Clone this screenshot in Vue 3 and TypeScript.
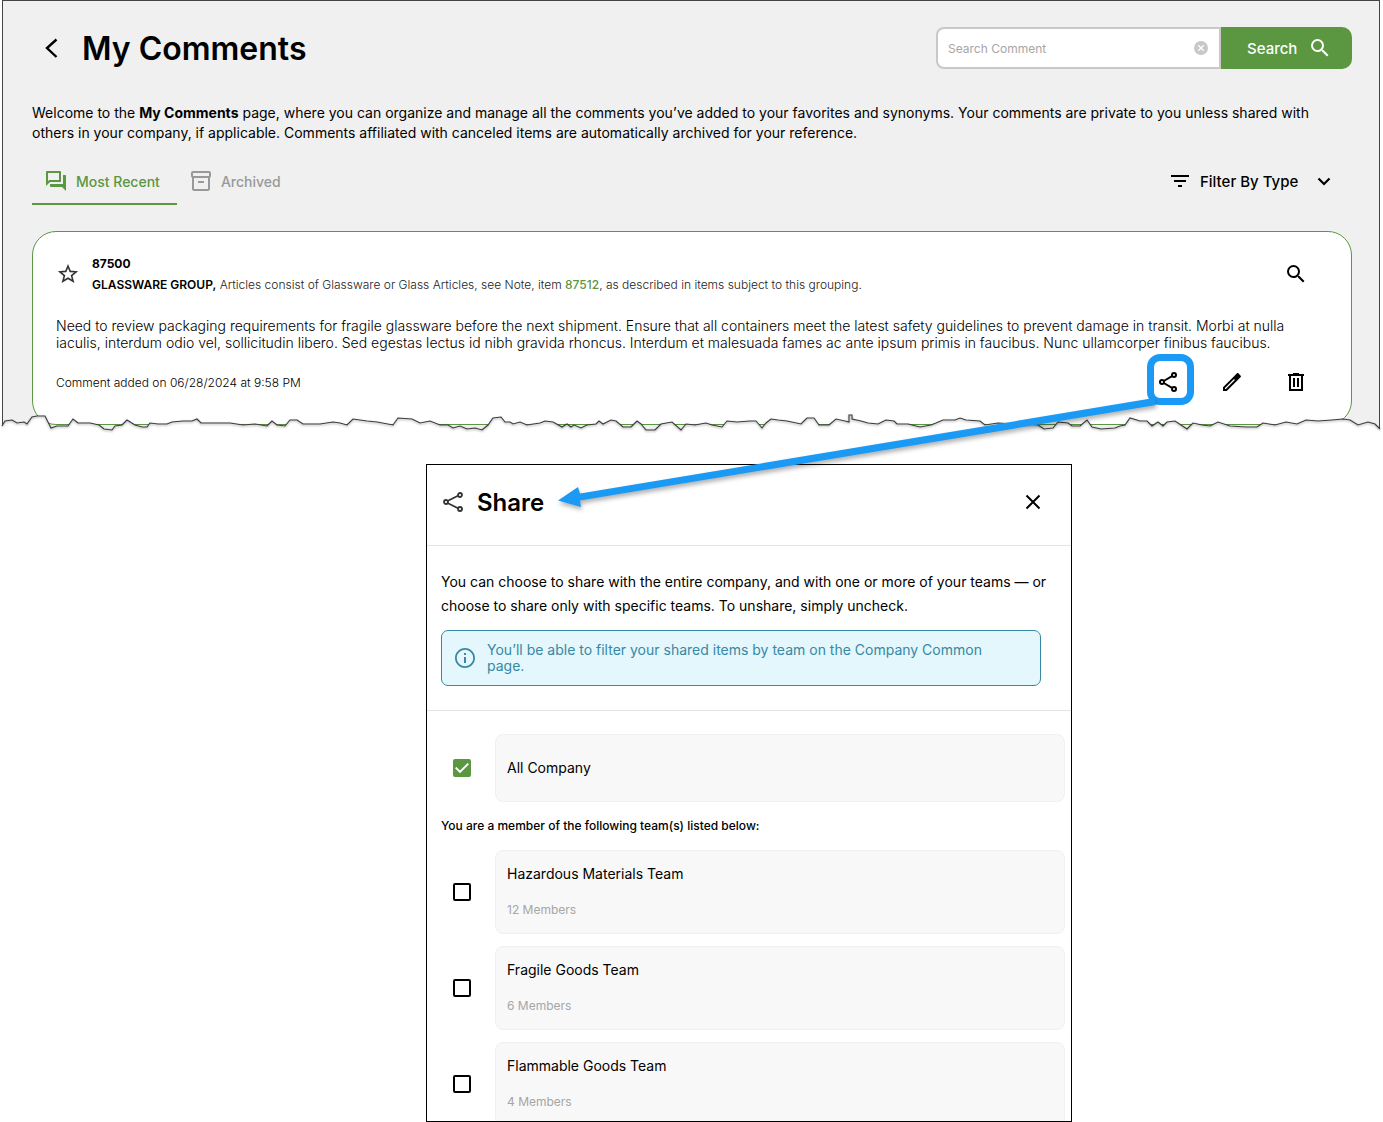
<script setup lang="ts">
import { ref } from 'vue'

interface Team {
  id: string
  name: string
  members: number
  shared: boolean
}

const query = ref('')
const allCompany = ref(true)
const filterType = ref('')
const activeTab = ref<'recent' | 'archived'>('recent')
const teams = ref<Team[]>([
  { id: 'hazmat', name: 'Hazardous Materials Team', members: 12, shared: false },
  { id: 'fragile', name: 'Fragile Goods Team', members: 6, shared: false },
  { id: 'flammable', name: 'Flammable Goods Team', members: 4, shared: false },
])

// Torn lower edge of the page panel, left to right.
const tear =
  '2,426 5,421 12,420 17,423 24,422 27,424 32,417 37,416 45,416 51,428 57,426 68,426 73,419 78,423 90,423 99,425 104,429 112,430 115,426 122,425 127,420 135,425 142,427 147,427 150,423 158,424 167,424 172,422 183,421 192,421 197,419 201,423 213,423 230,423 243,425 255,424 267,426 272,421 277,425 285,426 290,420 297,420 303,424 320,424 333,422 340,423 347,425 353,419 367,421 377,422 393,425 398,418 412,419 420,423 430,421 440,425 448,425 453,428 460,426 ' +
  '467,429 475,428 482,430 488,425 493,418 501,417 505,422 510,422 513,424 520,422 527,425 540,423 545,421 553,422 562,427 567,424 571,427 574,425 581,428 587,425 596,424 599,421 603,424 611,420 616,421 623,427 631,427 637,421 641,424 646,430 655,430 661,424 672,422 681,430 686,424 695,425 706,423 712,425 722,427 727,421 737,422 750,421 756,421 762,428 766,423 771,419 778,420 787,421 801,424 807,418 814,418 819,425 829,425 836,419 845,421 849,422 849,415 852,415 852,419 861,421 868,423 878,424 886,420 894,421 897,424 908,424 920,427 ' +
  '931,425 936,423 943,420 955,420 960,418 966,420 980,421 985,425 998,423 1013,424 1026,424 1038,425 1044,429 1053,428 1058,422 1068,423 1072,426 1080,426 1087,420 1092,427 1101,429 1115,428 1120,426 1125,425 1130,418 1140,421 1147,421 1152,426 1158,422 1163,426 1167,422 1175,421 1181,425 1187,429 1193,423 1202,425 1210,426 1218,422 1230,426 1246,427 1257,427 1263,423 1275,425 1286,422 1297,424 1306,420 1318,421 1332,420 1343,419 1350,420 1358,425 1368,422 1375,424 1380,429'
</script>

<template>
  <main class="page">
    <section class="panel">
      <header class="panel-head">
        <button class="icon-btn" type="button" aria-label="Back">
          <svg width="40" height="24" viewBox="0 0 40 24"><path d="M24.500 3.500 15 12l9.500 9" fill="none" stroke="#000" stroke-width="2.400" /></svg>
        </button>
        <h1>My Comments</h1>
        <form class="search" role="search" @submit.prevent>
          <div class="search-box">
            <input v-model="query" type="text" aria-label="Search Comment" placeholder="Search Comment" />
            <button class="icon-btn" type="button" aria-label="Clear" @click="query = ''">
              <svg width="14" height="14" viewBox="0 0 14 14"><circle cx="7" cy="7" r="7" fill="#c8c8c8" /><path d="m4.300 4.300 5.400 5.400m0-5.400L4.300 9.700" stroke="#fff" stroke-width="1.300" /></svg>
            </button>
          </div>
          <button class="search-btn" type="submit">
            Search
            <svg width="24" height="24" viewBox="0 0 24 24" fill="#fff"><path d="M15.500 14h-.79l-.28-.27A6.471 6.471 0 0 0 16 9.500 6.500 6.500 0 1 0 9.500 16c1.610 0 3.090-.59 4.230-1.570l.27.28v.79l5 4.990L20.490 19l-4.990-5zm-6 0C7.010 14 5 11.990 5 9.500S7.010 5 9.500 5 14 7.010 14 9.500 11.990 14 9.500 14z" /></svg>
          </button>
        </form>
      </header>

      <p class="intro">
        Welcome to the <strong>My Comments</strong> page, where you can organize and manage all the comments you’ve added
        to your favorites and synonyms. Your comments are private to you unless shared with others in your company, if
        applicable. Comments affiliated with canceled items are automatically archived for your reference.
      </p>

      <div class="toolbar">
        <nav class="tabs">
          <button class="tab" :class="{ active: activeTab === 'recent' }" type="button" @click="activeTab = 'recent'">
            <svg width="24" height="24" viewBox="0 0 24 24" fill="currentColor"><path d="M15 4v7H5.170L4 12.170V4h11m1-2H3c-.55 0-1 .45-1 1v14l4-4h10c.55 0 1-.45 1-1V3c0-.55-.45-1-1-1zm5 4h-2v9H6v2c0 .55.45 1 1 1h11l4 4V7c0-.55-.45-1-1-1z" /></svg>
            Most Recent
          </button>
          <button class="tab" :class="{ active: activeTab === 'archived' }" type="button" @click="activeTab = 'archived'">
            <svg width="24" height="24" viewBox="0 0 24 24" fill="currentColor"><path d="M20 2H4c-1 0-2 .9-2 2v3.010c0 .72.43 1.340 1 1.690V20c0 1.100 1.100 2 2 2h14c.9 0 2-.9 2-2V8.700c.57-.35 1-.97 1-1.690V4c0-1.100-1-2-2-2zm-1 18H5V9h14v11zm1-13H4V4h16v3zM9 12h6v2H9z" /></svg>
            Archived
          </button>
        </nav>
        <label class="filter">
          <svg width="24" height="24" viewBox="0 0 24 24"><path d="M10 18h4v-2h-4v2zM3 6v2h18V6H3zm3 7h12v-2H6v2z" /></svg>
          <select v-model="filterType" aria-label="Filter By Type">
            <option value="">Filter By Type</option>
          </select>
          <svg width="24" height="24" viewBox="0 0 24 24"><path d="m6.500 9.500 5.500 5.500 5.500-5.500" fill="none" stroke="#000" stroke-width="2.200" /></svg>
        </label>
      </div>

      <article class="card">
        <div class="card-head">
          <button class="icon-btn" type="button" aria-label="Add to favorites">
            <svg width="24" height="24" viewBox="0 0 24 24"><path d="m12 4 2.200 5.400 5.900.4-4.500 3.800 1.500 5.700-5.100-3.100-5.100 3.100 1.500-5.700-4.500-3.800 5.900-.4z" fill="none" stroke="#333" stroke-width="1.600" /></svg>
          </button>
          <div class="item">
            <strong>87500</strong>
            <p>
              <strong>GLASSWARE GROUP,</strong> Articles consist of Glassware or Glass Articles, see Note, item
              <a href="#87512">87512</a>, as described in items subject to this grouping.
            </p>
          </div>
          <button class="icon-btn" type="button" aria-label="View item">
            <svg width="24" height="24" viewBox="0 0 24 24"><path d="M15.500 14h-.79l-.28-.27A6.471 6.471 0 0 0 16 9.500 6.500 6.500 0 1 0 9.500 16c1.610 0 3.090-.59 4.230-1.570l.27.28v.79l5 4.990L20.490 19l-4.990-5zm-6 0C7.010 14 5 11.990 5 9.500S7.010 5 9.500 5 14 7.010 14 9.500 11.990 14 9.500 14z" /></svg>
          </button>
        </div>
        <p class="comment">
          Need to review packaging requirements for fragile glassware before the next shipment. Ensure that all
          containers meet the latest safety guidelines to prevent damage in transit. Morbi at nulla iaculis, interdum
          odio vel, sollicitudin libero. Sed egestas lectus id nibh gravida rhoncus. Interdum et malesuada fames ac ante
          ipsum primis in faucibus. Nunc ullamcorper finibus faucibus.
        </p>
        <footer class="card-foot">
          <span>Comment added on 06/28/2024 at 9:58 PM</span>
          <div class="actions">
            <button class="icon-btn share" type="button" aria-label="Share">
              <svg width="24" height="24" viewBox="0 0 24 24" fill="none" stroke="#000" stroke-width="2"><path d="M7.800 11 16 6.200M7.800 13l8.200 4.800" /><circle cx="6" cy="12" r="2" /><circle cx="18" cy="5" r="2" /><circle cx="18" cy="19" r="2" /></svg>
            </button>
            <button class="icon-btn" type="button" aria-label="Edit">
              <svg width="24" height="24" viewBox="0 0 24 24"><path d="M3 17.250V21h3.750L17.810 9.940l-3.750-3.750L3 17.250zM5.900 19H5v-.9l9-9 .9.900zM20.700 7.040c.4-.39.4-1.020 0-1.410l-2.330-2.340c-.39-.39-1.020-.39-1.410 0l-2.900 2.900 3.750 3.750z" /></svg>
            </button>
            <button class="icon-btn" type="button" aria-label="Delete">
              <svg width="24" height="24" viewBox="0 0 24 24"><path d="M4 4h5V3h6v1h5v2h-1v15H5V6H4zm3 2v13h10V6zm2 2h2v9H9zm4 0h2v9h-2z" /></svg>
            </button>
          </div>
        </footer>
      </article>

      <svg class="tear" viewBox="2 408 1378 28" preserveAspectRatio="none" aria-hidden="true">
        <polygon :points="tear + ' 1382,437 0,437'" fill="#fff" />
        <polyline class="tear-line" :points="tear" fill="none" stroke="#3c3c3c" stroke-width="1.100" />
      </svg>
    </section>

    <div class="stage">
      <section class="dialog" role="dialog" aria-labelledby="share-title">
        <header class="dialog-head">
          <svg width="24" height="24" viewBox="0 0 24 24" fill="none" stroke="#333" stroke-width="1.800"><path d="M6.500 11 17 5.800M6.500 13 17 18.200" /><circle cx="5" cy="12" r="2" /><circle cx="19" cy="5" r="2" /><circle cx="19" cy="19" r="2" /></svg>
          <h2 id="share-title">Share</h2>
          <button class="icon-btn" type="button" aria-label="Close">
            <svg width="24" height="24" viewBox="0 0 24 24"><path d="m5.500 5.500 13 13m0-13-13 13" stroke="#000" stroke-width="2" /></svg>
          </button>
        </header>

        <div class="dialog-intro">
          <p>
            You can choose to share with the entire company, and with one or more of your teams — or choose to share only
            with specific teams. To unshare, simply uncheck.
          </p>
          <div class="note">
            <svg width="24" height="24" viewBox="0 0 24 24" fill="#3788a3"><path d="M11 7h2v2h-2zm0 4h2v6h-2zm1-9C6.480 2 2 6.480 2 12s4.480 10 10 10 10-4.480 10-10S17.520 2 12 2zm0 18.200c-4.500 0-8.200-3.700-8.200-8.200S7.500 3.800 12 3.800s8.200 3.700 8.200 8.200-3.700 8.200-8.200 8.200z" /></svg>
            <span>You’ll be able to filter your shared items by team on the Company Common page.</span>
          </div>
        </div>

        <div class="choices">
          <label class="choice">
            <input v-model="allCompany" type="checkbox" />
            <span class="tile single"><span class="name">All Company</span></span>
          </label>
          <p class="hint">You are a member of the following team(s) listed below:</p>
          <label v-for="team in teams" :key="team.id" class="choice">
            <input v-model="team.shared" type="checkbox" />
            <span class="tile">
              <span class="name">{{ team.name }}</span>
              <span class="count">{{ team.members }} Members</span>
            </span>
          </label>
        </div>
      </section>
    </div>

    <svg class="arrow" viewBox="0 380 1383 140" preserveAspectRatio="none" aria-hidden="true">
      <path d="M1154 398 580 493.500 578 487 558 500.500 581 507 580 500.500 1156 405z" fill="#1b9af5" />
    </svg>
  </main>
</template>

<style>
body {
  background: #fff;
}
</style>

<style scoped>
.page {
  position: relative;
  display: flex;
  flex-direction: column;
  height: 100vh;
  min-height: 800px;
  box-sizing: border-box;
  overflow: hidden;
  font-family: Inter, 'Liberation Sans', sans-serif;
  font-size: 14px;
  color: #000;
}
.page * {
  box-sizing: border-box;
}
h1,
h2,
p {
  margin: 0;
}
svg {
  display: block;
  flex: none;
}
button,
input,
select {
  font: inherit;
  color: inherit;
}
.icon-btn {
  display: flex;
  flex: none;
  padding: 0;
  border: 0;
  background: none;
}
.panel {
  position: relative;
  flex: none;
  margin: 0 3px 0 2px;
  padding: 26px 27px 11px 29px;
  border: 1px solid #444;
  border-bottom: 0;
  background: #f0f0f0;
}
.panel-head {
  display: flex;
  align-items: center;
  gap: 10px;
  height: 42px;
}
h1 {
  padding-top: 2px;
  font-size: 32px;
  line-height: 40px;
  font-weight: 600;
}
.search {
  display: flex;
  width: 416px;
  height: 42px;
  margin-left: auto;
}
.search-box {
  display: flex;
  flex: 1;
  align-items: center;
  min-width: 0;
  padding: 0 11px 0 10px;
  border: 2px solid #c8c8c8;
  border-radius: 8px 0 0 8px;
  background: #fff;
}
.search-box input {
  flex: 1;
  min-width: 0;
  padding: 0;
  border: 0;
  outline: 0;
  background: none;
  font-size: 12px;
}
.search-box input::placeholder {
  color: #a6a6a6;
}
.search-btn {
  display: flex;
  align-items: center;
  justify-content: space-between;
  width: 131px;
  padding: 0 20px 0 26px;
  border: 0;
  border-radius: 0 10px 10px 0;
  background: #5b9641;
  color: #fff;
  font-size: 15px;
  font-weight: 500;
}
.intro {
  margin-top: 34px;
  line-height: 20px;
}
.toolbar {
  display: flex;
  justify-content: space-between;
  align-items: center;
  margin-top: 14px;
}
.tabs {
  display: flex;
}
.tab {
  display: flex;
  align-items: center;
  gap: 8px;
  height: 48px;
  padding: 0 17px 0 12px;
  border: solid transparent;
  border-width: 2px 0;
  background: none;
  color: #999;
  font-weight: 500;
}
.tab.active {
  border-bottom-color: #5b9641;
  color: #5b9641;
}
.filter {
  display: flex;
  align-items: center;
  gap: 8px;
  margin-right: 16px;
  font-size: 15px;
  font-weight: 500;
}
.filter select {
  padding: 0 5px 0 0;
  border: 0;
  background: none;
  appearance: none;
}
.card {
  margin-top: 26px;
  padding: 21px 43px 30px 23px;
  border: 1px solid #5b9641;
  border-radius: 24px;
  background: #fff;
}
.card-head {
  display: flex;
  align-items: center;
  gap: 12px;
  font-size: 12px;
  line-height: 21px;
  color: #222;
}
.item {
  flex: 1;
}
.item strong {
  color: #000;
  font-weight: 700;
}
.item p strong {
  font-weight: 600;
}
.item a {
  color: #5b9641;
  font-weight: 500;
  text-decoration: none;
}
.item p {
  font-weight: 300;
}
.comment {
  margin-top: 22px;
  line-height: 17px;
  font-weight: 300;
}
.card-foot {
  display: flex;
  align-items: center;
  justify-content: space-between;
  margin-top: 19px;
  font-size: 12px;
  font-weight: 300;
}
.actions {
  display: flex;
  gap: 40px;
}
.share {
  position: relative;
}
.share::after {
  content: '';
  position: absolute;
  inset: -16px -14px -11px -9px;
  border: 7px solid #1b9af5;
  border-radius: 13px;
}
.tear {
  position: absolute;
  left: -1px;
  bottom: 0;
  width: calc(100% + 2px);
  height: 28px;
  overflow: visible;
}
.tear-line {
  filter: drop-shadow(0 1px 1px rgba(0, 0, 0, 0.4));
}
.stage {
  display: grid;
  flex: 1;
  grid-template-columns: 426fr 646fr 311fr;
  min-height: 0;
  margin-top: 28px;
}
.dialog {
  display: flex;
  grid-column: 2;
  flex-direction: column;
  min-height: 0;
  overflow: hidden;
  border: 1px solid #000;
  background: #fff;
}
.dialog-head {
  display: flex;
  flex: none;
  align-items: center;
  gap: 12px;
  padding: 24px 26px 30px 14px;
  border-bottom: 1px solid #e4e4e4;
}
.dialog-head button {
  margin-left: auto;
}
h2 {
  padding-top: 2px;
  font-size: 24px;
  line-height: 24px;
  font-weight: 600;
}
.dialog-intro {
  flex: none;
  padding: 24px 14px;
  border-bottom: 1px solid #e4e4e4;
  line-height: 24px;
}
.note {
  display: flex;
  align-items: center;
  gap: 10px;
  margin: 12px 16px 0 0;
  padding: 11px 40px 11px 11px;
  border: 1px solid #3788a3;
  border-radius: 7px;
  background: #e4f7fd;
  color: #3788a3;
  line-height: 16px;
}
.choices {
  flex: none;
  padding: 23px 6px 12px 14px;
}
.choice {
  display: flex;
  align-items: center;
  gap: 24px;
  margin-bottom: 12px;
}
.choice input {
  position: relative;
  flex: none;
  width: 18px;
  height: 18px;
  margin: 0 0 0 12px;
  border: 2px solid #000;
  border-radius: 2px;
  background: #fff;
  appearance: none;
}
.choice input:checked {
  border-color: #5b9641;
  background: #5b9641;
}
.choice input:checked::after {
  content: '';
  position: absolute;
  inset: 0;
  background: #fff;
  clip-path: polygon(0 52%, 10% 42%, 36% 68%, 90% 14%, 100% 24%, 36% 88%);
}
.tile {
  display: flex;
  flex: 1;
  flex-direction: column;
  gap: 16px;
  justify-content: center;
  height: 84px;
  padding: 0 11px;
  border: 1px solid #f0f0f0;
  border-radius: 8px;
  background: #f8f8f8;
  line-height: 20px;
}
.tile.single {
  height: 68px;
}
.count {
  color: #a6a6a6;
  font-size: 12px;
}
.hint {
  margin-bottom: 12px;
  font-size: 12px;
  line-height: 24px;
  font-weight: 500;
}
.arrow {
  position: absolute;
  top: 380px;
  left: 0;
  width: 100%;
  height: 140px;
  pointer-events: none;
  filter: drop-shadow(1px 3px 2px rgba(0, 0, 0, 0.3));
}
</style>
